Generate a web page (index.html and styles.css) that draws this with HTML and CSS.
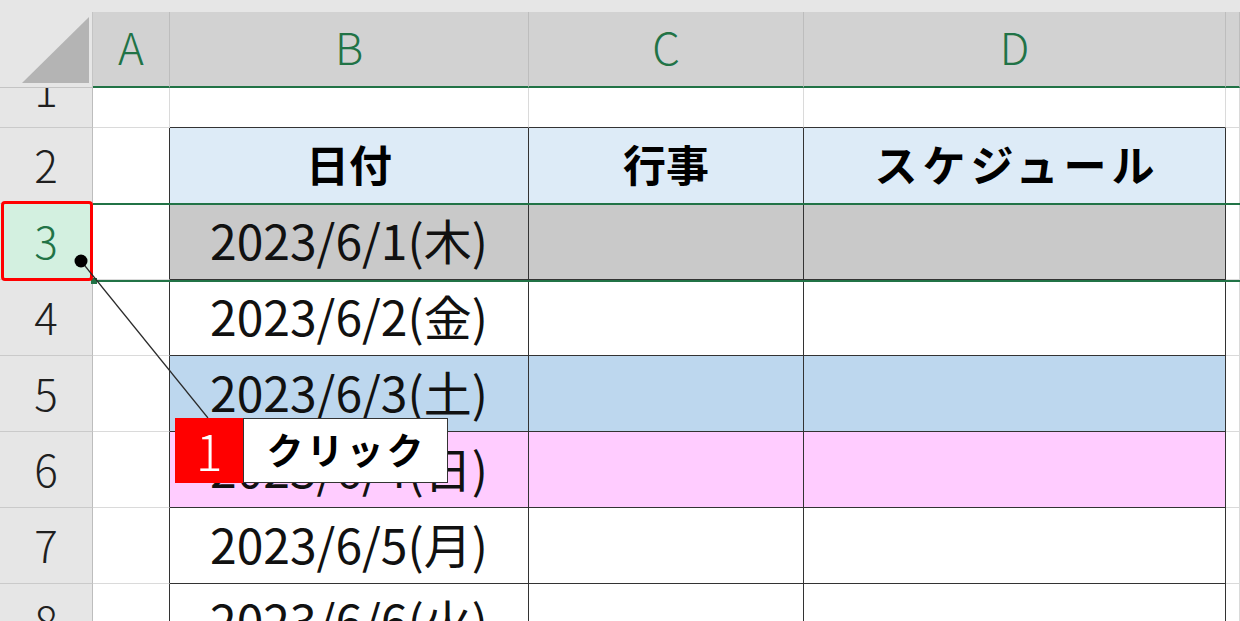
FILE: index.html
```html
<!DOCTYPE html>
<html lang="ja">
<head>
<meta charset="utf-8">
<title>Excel 行の選択</title>
<link rel="stylesheet" href="styles.css">
</head>
<body>
<div class="page">
  <div class="topband"></div>
  <div class="sheet">
    <!-- column header row -->
    <div class="corner">
      <svg class="corner-tri" width="93" height="76" viewBox="0 0 93 76"><polygon points="22,71 89,71 89,5" fill="#b4b4b4"/></svg>
    </div>
    <div class="ch">A</div>
    <div class="ch">B</div>
    <div class="ch">C</div>
    <div class="ch">D</div>
    <div class="ch"></div>

    <!-- row 1 (partially scrolled) -->
    <div class="rh rh-cut"><span>1</span></div>
    <div class="c"></div>
    <div class="c top-b"></div>
    <div class="c top-b"></div>
    <div class="c top-b"></div>
    <div class="c"></div>

    <!-- row 2 -->
    <div class="rh">2</div>
    <div class="c left-of-t"></div>
    <div class="c t head-fill bold">日付</div>
    <div class="c t head-fill bold">行事</div>
    <div class="c t head-fill bold wide">スケジュール</div>
    <div class="c"></div>

    <!-- row 3 (selected) -->
    <div class="rh rh-sel">3</div>
    <div class="c left-of-t"></div>
    <div class="c t gray-fill">2023/6/1(木)</div>
    <div class="c t gray-fill"></div>
    <div class="c t gray-fill"></div>
    <div class="c"></div>

    <!-- row 4 -->
    <div class="rh">4</div>
    <div class="c left-of-t"></div>
    <div class="c t">2023/6/2(金)</div>
    <div class="c t"></div>
    <div class="c t"></div>
    <div class="c"></div>

    <!-- row 5 -->
    <div class="rh">5</div>
    <div class="c left-of-t"></div>
    <div class="c t blue-fill">2023/6/3(土)</div>
    <div class="c t blue-fill"></div>
    <div class="c t blue-fill"></div>
    <div class="c"></div>

    <!-- row 6 -->
    <div class="rh">6</div>
    <div class="c left-of-t"></div>
    <div class="c t pink-fill">2023/6/4(日)</div>
    <div class="c t pink-fill"></div>
    <div class="c t pink-fill"></div>
    <div class="c"></div>

    <!-- row 7 -->
    <div class="rh">7</div>
    <div class="c left-of-t"></div>
    <div class="c t">2023/6/5(月)</div>
    <div class="c t"></div>
    <div class="c t"></div>
    <div class="c"></div>

    <!-- row 8 -->
    <div class="rh">8</div>
    <div class="c left-of-t"></div>
    <div class="c t">2023/6/6(火)</div>
    <div class="c t"></div>
    <div class="c t"></div>
    <div class="c"></div>
  </div>

  <!-- selection frame of row 3 -->
  <div class="selection"></div>
  <div class="fill-handle"></div>
  <div class="red-frame"></div>

  <!-- leader line and dot -->
  <svg class="leader" width="1240" height="621" viewBox="0 0 1240 621">
    <line x1="81" y1="261" x2="208" y2="418" stroke="#2b2b2b" stroke-width="1.2"/>
    <circle cx="81" cy="261" r="6.5" fill="#000"/>
  </svg>

  <!-- callout -->
  <div class="callout">
    <div class="callout-num">1</div>
    <div class="callout-label">クリック</div>
  </div>
</div>
</body>
</html>
```

FILE: styles.css
```css
html, body {
  margin: 0;
  padding: 0;
  background: #ffffff;
}

body {
  width: 1240px;
  height: 621px;
  overflow: hidden;
  font-family: "Noto Sans CJK JP", "Noto Sans", sans-serif;
}

.page {
  position: relative;
  width: 1240px;
  height: 621px;
  overflow: hidden;
}

.topband {
  height: 12px;
  background: #e6e6e6;
}

.sheet {
  display: grid;
  grid-template-columns: 93px 77px 359px 275px 422px 1fr;
  grid-template-rows: 76px 40px repeat(7, 76px);
}

.sheet > div {
  box-sizing: border-box;
  display: flex;
  align-items: center;
  justify-content: center;
  white-space: nowrap;
  overflow: hidden;
}

/* corner */
.corner {
  background: #e6e6e6;
  border-right: 1px solid #c4c4c4;
  border-bottom: 1px solid #c4c4c4;
  position: relative;
}

.corner-tri {
  display: block;
  position: absolute;
  left: 0;
  top: 0;
}

/* column headers */
.ch {
  background: #d2d2d2;
  border-right: 1px solid #bdbdbd;
  border-bottom: 2px solid #217346;
  color: #217346;
  font-size: 44px;
  font-weight: 300;
  padding-bottom: 6px;
}

/* row headers */
.rh {
  background: #e6e6e6;
  border-right: 1px solid #bdbdbd;
  border-bottom: 1px solid #cacaca;
  color: #1f1f1f;
  font-size: 44px;
  font-weight: 300;
  padding-bottom: 4px;
}

.rh-cut {
  align-items: flex-start !important;
  padding-bottom: 0 !important;
}

.rh-cut span {
  display: block;
  height: 76px;
  line-height: 76px;
  margin-top: -38px;
}

.rh-sel {
  background: #d3f0e0;
  color: #217346;
}

/* cells */
.c {
  background: #ffffff;
  border-right: 1px solid #dadada;
  border-bottom: 1px solid #dadada;
  color: #111111;
  font-size: 48px;
  font-weight: 400;
  padding-bottom: 6px;
}

.top-b {
  border-bottom-color: #333333;
}

.left-of-t {
  border-right-color: #333333;
}

.t {
  border-right-color: #333333;
  border-bottom-color: #333333;
}

.bold {
  font-weight: 700;
  font-size: 43px;
  color: #000000;
}

.wide {
  letter-spacing: 5px;
  padding-left: 5px;
}

.head-fill {
  background: #ddebf7;
}

.gray-fill {
  background: #c9c9c9;
}

.blue-fill {
  background: #bdd7ee;
}

.pink-fill {
  background: #ffccff;
}

/* selection overlay for row 3 */
.selection {
  position: absolute;
  left: 93px;
  right: 0;
  top: 203px;
  height: 79px;
  box-sizing: border-box;
  border-top: 2px solid #217346;
  border-bottom: 2px solid #217346;
  pointer-events: none;
}

.fill-handle {
  position: absolute;
  left: 91px;
  top: 278px;
  width: 6px;
  height: 6px;
  background: #217346;
}

.red-frame {
  position: absolute;
  left: 1px;
  top: 201px;
  width: 92px;
  height: 80px;
  box-sizing: border-box;
  border: 3px solid #ff0000;
  border-radius: 4px;
  pointer-events: none;
}

.leader {
  position: absolute;
  left: 0;
  top: 0;
  pointer-events: none;
}

/* callout */
.callout {
  position: absolute;
  left: 175px;
  top: 418px;
  display: flex;
  height: 65px;
}

.callout-num {
  width: 68px;
  height: 65px;
  background: #ff0000;
  color: #ffffff;
  font-size: 50px;
  font-weight: 300;
  display: flex;
  align-items: center;
  justify-content: center;
  padding-bottom: 4px;
  box-sizing: border-box;
}

.callout-label {
  width: 205px;
  height: 65px;
  box-sizing: border-box;
  background: #ffffff;
  border: 1px solid #333333;
  color: #000000;
  font-size: 37px;
  font-weight: 700;
  letter-spacing: 3px;
  display: flex;
  align-items: center;
  justify-content: center;
  padding-left: 2px;
  padding-bottom: 3px;
}
```
